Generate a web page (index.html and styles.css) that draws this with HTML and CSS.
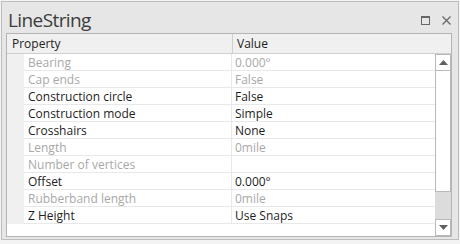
FILE: index.html
```html
<!DOCTYPE html>
<html>
<head>
<meta charset="utf-8">
<link rel="stylesheet" href="styles.css">
</head>
<body>
<div class="window">
  <div class="titlebar">
    <div class="title">LineString</div>
    <div class="controls">
      <span class="max"></span>
      <svg class="close" width="9" height="9" viewBox="0 0 9 9"><path d="M0.5 0.5 L8.5 8.5 M8.5 0.5 L0.5 8.5" stroke="#666" stroke-width="1.2" fill="none"/></svg>
    </div>
  </div>
  <div class="grid">
    <div class="head">
      <div class="hcell hprop">Property</div>
      <div class="hcell hval">Value</div>
    </div>
    <div class="body">
      <div class="rows">
        <div class="row dis"><div class="gut"></div><div class="name">Bearing</div><div class="val">0.000°</div></div>
        <div class="row dis"><div class="gut"></div><div class="name">Cap ends</div><div class="val">False</div></div>
        <div class="row"><div class="gut"></div><div class="name">Construction circle</div><div class="val">False</div></div>
        <div class="row"><div class="gut"></div><div class="name">Construction mode</div><div class="val">Simple</div></div>
        <div class="row"><div class="gut"></div><div class="name">Crosshairs</div><div class="val">None</div></div>
        <div class="row dis"><div class="gut"></div><div class="name">Length</div><div class="val">0mile</div></div>
        <div class="row dis"><div class="gut"></div><div class="name">Number of vertices</div><div class="val"></div></div>
        <div class="row"><div class="gut"></div><div class="name">Offset</div><div class="val">0.000°</div></div>
        <div class="row dis"><div class="gut"></div><div class="name">Rubberband length</div><div class="val">0mile</div></div>
        <div class="row"><div class="gut"></div><div class="name">Z Height</div><div class="val">Use Snaps</div></div>
      </div>
      <div class="scroll">
        <div class="sbtn"><svg width="9" height="5" viewBox="0 0 9 5"><path d="M0 5 L4.5 0 L9 5 Z" fill="#606060"/></svg></div>
        <div class="thumb"></div>
        <div class="track"></div>
        <div class="sbtn"><svg width="9" height="5" viewBox="0 0 9 5"><path d="M0 0 L9 0 L4.5 5 Z" fill="#606060"/></svg></div>
      </div>
    </div>
  </div>
</div>
</body>
</html>
```
FILE: styles.css
```css
html, body {
  margin: 0;
  padding: 0;
  background: #f3f3f3;
}
.window {
  box-sizing: border-box;
  margin: 1px;
  width: 458px;
  height: 239px;
  border: 1px solid #bdbdbd;
  background: #e6e6e6;
  padding: 0 6px 2px 4px;
  display: flex;
  flex-direction: column;
  font-family: "Open Sans", "Noto Sans", sans-serif;
}
.titlebar {
  height: 31px;
  display: flex;
  align-items: flex-start;
  justify-content: space-between;
}
.title {
  font-size: 19px;
  color: #3c3c3c;
  margin-top: 5px;
  margin-left: 2px;
  letter-spacing: -0.6px;
}
.controls {
  display: flex;
  align-items: center;
  gap: 12px;
  margin-top: 14px;
  margin-right: 1px;
}
.max {
  box-sizing: border-box;
  width: 9px;
  height: 9px;
  border: 1px solid #666;
  border-top-width: 2px;
}
.close {
  display: block;
}
.grid {
  flex: 1;
  border: 1px solid #b4b4b4;
  background: #fff;
  display: flex;
  flex-direction: column;
  min-height: 0;
}
.head {
  height: 19px;
  display: flex;
  background: #f0f0f0;
  border-bottom: 1px solid #cfcfcf;
  font-size: 12px;
  color: #222;
}
.hcell {
  display: flex;
  align-items: center;
  padding-left: 5px;
}
.hprop {
  width: 220px;
  border-right: 1px solid #cfcfcf;
}
.hval {
  flex: 1;
  padding-left: 4px;
}
.body {
  flex: 1;
  display: flex;
  min-height: 0;
}
.rows {
  flex: 1;
  display: flex;
  flex-direction: column;
}
.row {
  display: flex;
  height: 17px;
  font-size: 12px;
  color: #1e1e1e;
}
.row.dis {
  color: #a8a8a8;
}
.gut {
  width: 17px;
  background: #f0f0f0;
}
.name {
  box-sizing: border-box;
  width: 208px;
  border-right: 1px solid #e8e8e8;
  border-bottom: 1px solid #e8e8e8;
  padding-left: 4px;
  display: flex;
  align-items: center;
  white-space: nowrap;
}
.val {
  flex: 1;
  border-bottom: 1px solid #e8e8e8;
  padding-left: 3px;
  display: flex;
  align-items: center;
  white-space: nowrap;
}
.scroll {
  width: 16px;
  display: flex;
  flex-direction: column;
  background: #fff;
}
.sbtn {
  box-sizing: border-box;
  height: 17px;
  border: 1px solid #b9b9b9;
  background: #fff;
  display: flex;
  align-items: center;
  justify-content: center;
}
.thumb {
  box-sizing: border-box;
  height: 121px;
  border: 1px solid #b9b9b9;
  border-top: 0;
  background: #fff;
}
.track {
  flex: 1;
  background: #dcdcdc;
}
```
